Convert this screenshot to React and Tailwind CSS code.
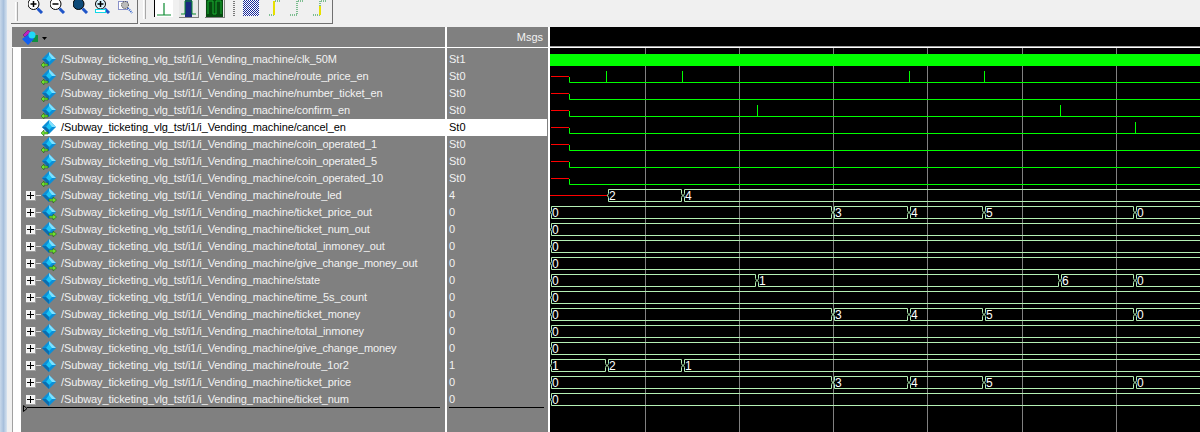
import React from 'react';

const base = '/Subway_ticketing_vlg_tst/i1/i_Vending_machine/';

// dir: in = arrow bottom-left, out = arrow bottom-right, none = internal
const signals = [
  { name: 'clk_50M', msg: 'St1', dir: 'in' },
  { name: 'route_price_en', msg: 'St0', dir: 'in', pulses: [606, 682, 909, 984] },
  { name: 'number_ticket_en', msg: 'St0', dir: 'in' },
  { name: 'confirm_en', msg: 'St0', dir: 'in', pulses: [757, 1060] },
  { name: 'cancel_en', msg: 'St0', dir: 'in', pulses: [1135], selected: true },
  { name: 'coin_operated_1', msg: 'St0', dir: 'in' },
  { name: 'coin_operated_5', msg: 'St0', dir: 'in' },
  { name: 'coin_operated_10', msg: 'St0', dir: 'in' },
  { name: 'route_led', msg: '4', dir: 'out', bus: [[607, '2'], [683, '4']], redUntil: 607 },
  { name: 'ticket_price_out', msg: '0', dir: 'out', bus: [[550, '0'], [833, '3'], [909, '4'], [984, '5'], [1135, '0']] },
  { name: 'ticket_num_out', msg: '0', dir: 'out', bus: [[550, '0']] },
  { name: 'total_inmoney_out', msg: '0', dir: 'out', bus: [[550, '0']] },
  { name: 'give_change_money_out', msg: '0', dir: 'out', bus: [[550, '0']] },
  { name: 'state', msg: '0', dir: 'none', bus: [[550, '0'], [757, '1'], [1060, '6'], [1135, '0']] },
  { name: 'time_5s_count', msg: '0', dir: 'none', bus: [[550, '0']] },
  { name: 'ticket_money', msg: '0', dir: 'none', bus: [[550, '0'], [833, '3'], [909, '4'], [984, '5'], [1135, '0']] },
  { name: 'total_inmoney', msg: '0', dir: 'none', bus: [[550, '0']] },
  { name: 'give_change_money', msg: '0', dir: 'none', bus: [[550, '0']] },
  { name: 'route_1or2', msg: '1', dir: 'none', bus: [[550, '1'], [607, '2'], [683, '1']] },
  { name: 'ticket_price', msg: '0', dir: 'none', bus: [[550, '0'], [833, '3'], [909, '4'], [984, '5'], [1135, '0']] },
  { name: 'ticket_num', msg: '0', dir: 'none', bus: [[550, '0']] },
];

const gridLines = [645, 739, 833, 927, 1022, 1116];

const SignalIcon = ({ dir }) => (
  <svg width="16" height="16" viewBox="0 0 16 16" className="shrink-0">
    <path d="M8 0L15 7L8 14L1 7Z" fill="#0b8fd8" />
    <path d="M8 0L15 7L8 7Z" fill="#7fe0ff" />
    <path d="M8 3L11 7L8 10L5 7Z" fill="#19c4f5" />
    <path d="M1 7L8 14L8 10L5 7Z" fill="#0a6db0" />
    {dir === 'in' && <path d="M7 12H3V10L0 13L3 16V14H7Z" fill="#6fe030" stroke="#14500a" strokeWidth="0.5" />}
    {dir === 'out' && <path d="M8 11H12V9L15.5 12L12 15V13H8Z" fill="#6fe030" stroke="#14500a" strokeWidth="0.5" />}
  </svg>
);

const PlusBox = () => (
  <div className="w-[10px] h-[10px] shrink-0 bg-[#f4f4f4] border-b border-r border-[#a0a0a0] flex items-center justify-center">
    <svg width="7" height="7" viewBox="0 0 7 7">
      <path d="M0 3.5H7M3.5 0V7" stroke="#000" strokeWidth="1" />
    </svg>
  </div>
);

const SignalRow = ({ signal }) => (
  <div className={`h-[17px] flex items-center pl-[5px] text-[11px] tracking-[-0.1px] ${signal.selected ? 'bg-white text-black' : 'text-[#f2f2f2]'}`}>
    <div className="w-[15px] flex items-center shrink-0">
      {signal.bus && (
        <>
          <PlusBox />
          <div className="w-[5px] h-px bg-[#d8d8d8]" />
        </>
      )}
    </div>
    <SignalIcon dir={signal.dir} />
    <span className="ml-[4px] whitespace-nowrap">{base + signal.name}</span>
  </div>
);

const Magnifier = ({ mark, dark }) => (
  <svg width="16" height="14" viewBox="0 -3 16 14" className="shrink-0">
    <path d="M9.5 5.5L14 10" stroke="#1f55c8" strokeWidth="3" />
    <circle cx="5.5" cy="1" r="5.5" fill={dark ? '#0d4a78' : '#fff'} stroke="#000" />
    {mark === 'plus' && <path d="M2.5 1H8.5M5.5 -2V4" stroke="#000" strokeWidth="1.5" />}
    {mark === 'minus' && <path d="M2.5 1H8.5" stroke="#000" strokeWidth="1.5" />}
  </svg>
);

const ZoomRange = () => (
  <svg width="16" height="14" viewBox="0 -3 16 14" className="shrink-0">
    <path d="M9.5 5.5L14 10" stroke="#1f55c8" strokeWidth="3" />
    <circle cx="5.5" cy="1" r="5" fill="#d8f4ff" stroke="#000" />
    <path d="M2.5 1H8.5M5.5 -2V4" stroke="#000" strokeWidth="1.5" />
    <rect x="0.5" y="6.5" width="10" height="3" fill="#fff" stroke="#10d8e8" />
  </svg>
);

const ZoomDotted = () => (
  <svg width="16" height="14" viewBox="0 0 16 14" className="shrink-0">
    <rect x="1.5" y="1.5" width="9" height="8" fill="#fff" stroke="#1a2a9a" strokeDasharray="1 1" />
    <circle cx="8" cy="5" r="3.5" fill="#bbb" stroke="#333" strokeDasharray="1 1" />
    <path d="M11 8L15 13" stroke="#1f55c8" strokeWidth="2" strokeDasharray="1 1" />
  </svg>
);

const Grip = () => <div className="w-[3px] h-[19px] mb-[2px] border-l border-r border-l-white border-r-[#a8a8a8] shrink-0" />;

const Toolbar = () => (
  <div className="h-[27px] flex items-start gap-[2px] ml-[-1px]">
    <div className="w-[127px] h-[24px] flex items-end bg-[#f0f0f0] border-r border-b border-[#707070] pl-[4px]">
      <Grip />
      <div className="h-[23px] ml-[10px] flex items-start gap-[6px]">
        <Magnifier mark="plus" />
        <Magnifier mark="minus" />
        <div className="ml-px"><Magnifier dark /></div>
        <ZoomRange />
        <ZoomDotted />
      </div>
    </div>
    <div className="w-[193px] h-[24px] flex items-start bg-[#f0f0f0] border-r border-b border-[#707070] pl-[3px]">
      <Grip />
      <div className="ml-[8px] flex items-start">
        <div className="w-[19px] h-[17px] bg-white border-l border-black">
          <svg width="18" height="17" viewBox="0 0 18 17"><path d="M2 15H16M9 3V15" stroke="#0a8a30" strokeWidth="1.2" /></svg>
        </div>
        <div className="w-[20px] h-[18px] ml-[6px] bg-[#e8e8e8] border-r border-b border-[#808080]">
          <svg width="19" height="17" viewBox="0 0 19 17"><rect x="6" y="0" width="7" height="17" fill="#1a2a80" /><path d="M2 14H6V1H13V14H17" fill="none" stroke="#0a8a30" /></svg>
        </div>
        <div className="w-[20px] h-[18px] ml-[6px] bg-[#e8e8e8] border-r border-b border-[#808080]">
          <svg width="19" height="17" viewBox="0 0 19 17"><rect x="1" y="0" width="17" height="17" fill="#064a10" /><path d="M3 14V1H8V14H11V1H16V14" fill="none" stroke="#18b030" /></svg>
        </div>
        <svg width="2" height="16" viewBox="0 0 2 16" className="ml-[8px]"><path d="M1 1V16" stroke="#000" strokeDasharray="1 1" /></svg>
        <div className="ml-[8px] w-[16px] h-[16px] bg-[repeating-conic-gradient(#1a2a9a_0_25%,#fff_0_50%)] bg-[length:2px_2px]" />
        <svg width="14" height="16" viewBox="0 0 14 16" className="ml-[9px]">
          <path d="M1 15H6V1H12" fill="none" stroke="#0a8a30" strokeDasharray="1 1" />
          <path d="M6 1V15" stroke="#e8e000" strokeWidth="2" />
        </svg>
        <svg width="16" height="16" viewBox="0 0 16 16" className="ml-[7px]"><path d="M1 15H8V1H15" fill="none" stroke="#0a8a30" strokeDasharray="1 1" /></svg>
        <svg width="16" height="16" viewBox="0 0 16 16" className="ml-[7px]">
          <path d="M1 15H8V1H15" fill="none" stroke="#0a8a30" strokeDasharray="1 1" />
          <path d="M8 6V15" stroke="#e8e000" strokeWidth="2" />
        </svg>
      </div>
    </div>
  </div>
);

const hexPath = (s, e, t) =>
  `M${s + 1.5} ${t + 0.5}H${e - 0.5}V${t + 4.5}L${e + 0.5} ${t + 6.5}L${e - 0.5} ${t + 8.5}V${t + 12.5}H${s + 1.5}V${t + 8.5}L${s + 0.5} ${t + 6.5}L${s + 1.5} ${t + 4.5}Z`;

// svg x/y are page coords shifted by the wave pane origin (550, 48)
const Wave = () => (
  <svg width="650" height="384" viewBox="550 48 650 384" className="block">
    <rect x="550" y="48" width="650" height="384" fill="#000" />
    {gridLines.map((x) => (
      <path key={x} d={`M${x + 0.5} 48V432`} stroke="#808080" />
    ))}
    <rect x="550" y="54" width="650" height="12" fill="#00ff00" />
    {signals.slice(1).map((sig, i) => {
      const n = i + 2;
      if (sig.bus) {
        const top = 393 - (21 - n) * 17;
        return (
          <g key={sig.name}>
            {sig.redUntil && <path d={`M550 ${top + 6.5}H${sig.redUntil}`} stroke="#ff0000" />}
            {sig.bus.map(([s, v], j) => {
              const next = sig.bus[j + 1];
              return (
                <g key={j}>
                  <path d={hexPath(s, next ? next[0] - 1 : 1210, top)} fill="none" stroke="#b4f0b4" />
                  <text x={s + 2} y={top + 11} fontSize="12" fill="#fff">{v}</text>
                </g>
              );
            })}
          </g>
        );
      }
      const low = 82 + (n - 2) * 17;
      return (
        <g key={sig.name}>
          <path d={`M551 ${low - 5.5}H569`} stroke="#ff0000" />
          <path d={`M569.5 ${low - 5}V${low + 0.5}H1200`} fill="none" stroke="#00ff00" />
          {(sig.pulses || []).map((x) => (
            <path key={x} d={`M${x + 0.5} ${low - 11}V${low}`} stroke="#00ff00" />
          ))}
        </g>
      );
    })}
  </svg>
);

const App = () => (
  <div className="w-[1200px] h-[432px] flex overflow-hidden bg-[#f0f0f0] font-['Liberation_Sans',sans-serif]">
    <div className="w-[7px] h-full shrink-0 bg-gradient-to-r from-[#c8d8ea] via-[#a8c0dc] to-[#d8e4f0]" />
    <div className="w-[5px] h-full shrink-0" />
    <div className="flex-1 min-w-0 flex flex-col">
      <Toolbar />
      <div className="flex-1 flex min-h-0">
        {/* signal names */}
        <div className="w-[433px] shrink-0 flex flex-col">
          <div className="h-[20px] bg-[#808080] flex items-center pl-[10px] shrink-0">
            <svg width="17" height="17" viewBox="0 0 17 17">
              <path d="M1 6L6 1L11 5H6L3 8Z" fill="#c020c0" stroke="#501060" strokeWidth="0.5" />
              <rect x="10" y="6" width="6" height="7" fill="#109040" />
              <path d="M7 5L12 10L6 16L0 10Z" fill="#1060f0" />
              <circle cx="10" cy="6" r="3.5" fill="#20d8f8" />
            </svg>
            <svg width="5" height="3" viewBox="0 0 5 3" className="ml-[3px] mt-[2px]"><path d="M0 0H5L2.5 3Z" fill="#000" /></svg>
          </div>
          <div className="h-[1px] bg-white shrink-0" />
          <div className="flex-1 flex min-h-0">
            <div className="w-[9px] bg-white border-l border-[#a0a0a0] shrink-0" />
            <div className="flex-1 min-w-0 bg-[#808080] pt-[3px] relative">
              {signals.map((s) => <SignalRow key={s.name} signal={s} />)}
              <div className="h-px bg-black ml-[6px] mr-[5px] mt-[-1px]" />
              <svg width="5" height="7" viewBox="0 0 5 7" className="absolute left-[2px] top-[357px]"><path d="M0.5 0.5L4 3.5L0.5 6.5Z" fill="none" stroke="#000" /></svg>
            </div>
          </div>
        </div>
        <div className="w-[2px] bg-white shrink-0" />
        {/* values */}
        <div className="w-[101px] shrink-0 flex flex-col">
          <div className="h-[20px] bg-[#808080] flex items-center justify-end pr-[5px] text-[11px] text-[#f2f2f2] shrink-0">Msgs</div>
          <div className="h-[1px] bg-white shrink-0" />
          <div className="flex-1 bg-[#808080] pt-[3px] pr-px">
            {signals.map((s) => (
              <div key={s.name} className={`h-[17px] pl-[2px] text-[11px] leading-[16px] ${s.selected ? 'bg-white text-black' : 'text-[#f2f2f2]'}`}>{s.msg}</div>
            ))}
            <div className="h-px bg-black ml-[2px] mr-[3px] mt-[-1px]" />
          </div>
        </div>
        <div className="w-[2px] bg-white shrink-0" />
        {/* waves */}
        <div className="flex-1 min-w-0 flex flex-col">
          <div className="h-[19px] bg-black shrink-0" />
          <div className="h-px bg-[#a0a0a0] shrink-0" />
          <div className="h-px bg-white shrink-0" />
          <Wave />
        </div>
      </div>
    </div>
  </div>
);

export default App;
